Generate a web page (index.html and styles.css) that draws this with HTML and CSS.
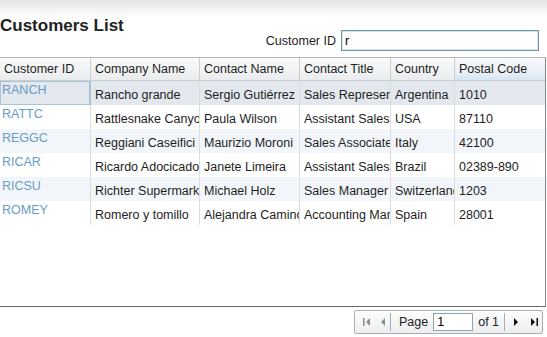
FILE: index.html
```html
<!DOCTYPE html>
<html lang="en">
<head>
    <meta charset="UTF-8">
    <meta name="viewport" content="width=device-width, initial-scale=1.0">
    <title>Customers List</title>
    <link rel="stylesheet" href="styles.css">
</head>
<body>
    <h1 class="title">Customers List</h1>

    <div class="filter">
        <label for="customer-id">Customer ID</label>
        <input type="text" id="customer-id" value="r">
    </div>

    <div class="grid">
        <div class="grid-row grid-head">
            <div class="cell">Customer ID</div>
            <div class="cell">Company Name</div>
            <div class="cell">Contact Name</div>
            <div class="cell">Contact Title</div>
            <div class="cell">Country</div>
            <div class="cell sorted">Postal Code</div>
        </div>
        <div class="grid-row selected">
            <div class="cell id current">RANCH</div>
            <div class="cell">Rancho grande</div>
            <div class="cell">Sergio Gutiérrez</div>
            <div class="cell">Sales Representative</div>
            <div class="cell">Argentina</div>
            <div class="cell">1010</div>
        </div>
        <div class="grid-row">
            <div class="cell id">RATTC</div>
            <div class="cell">Rattlesnake Canyon Grocery</div>
            <div class="cell">Paula Wilson</div>
            <div class="cell">Assistant Sales Representative</div>
            <div class="cell">USA</div>
            <div class="cell">87110</div>
        </div>
        <div class="grid-row alt">
            <div class="cell id">REGGC</div>
            <div class="cell">Reggiani Caseifici</div>
            <div class="cell">Maurizio Moroni</div>
            <div class="cell">Sales Associate</div>
            <div class="cell">Italy</div>
            <div class="cell">42100</div>
        </div>
        <div class="grid-row">
            <div class="cell id">RICAR</div>
            <div class="cell">Ricardo Adocicados</div>
            <div class="cell">Janete Limeira</div>
            <div class="cell">Assistant Sales Agent</div>
            <div class="cell">Brazil</div>
            <div class="cell">02389-890</div>
        </div>
        <div class="grid-row alt">
            <div class="cell id">RICSU</div>
            <div class="cell">Richter Supermarkt</div>
            <div class="cell">Michael Holz</div>
            <div class="cell">Sales Manager</div>
            <div class="cell">Switzerland</div>
            <div class="cell">1203</div>
        </div>
        <div class="grid-row">
            <div class="cell id">ROMEY</div>
            <div class="cell">Romero y tomillo</div>
            <div class="cell">Alejandra Camino</div>
            <div class="cell">Accounting Manager</div>
            <div class="cell">Spain</div>
            <div class="cell">28001</div>
        </div>
    </div>

    <div class="pager-wrap">
        <div class="pager">
            <span class="pager-btn first disabled">
                <svg width="7" height="8" viewBox="0 0 7 8"><rect x="0" y="0" width="1.5" height="8"/><polygon points="7,0 7,8 3,4"/></svg>
            </span>
            <span class="pager-btn prev disabled">
                <svg width="4" height="8" viewBox="0 0 4 8"><polygon points="4,0 4,8 0,4"/></svg>
            </span>
            <span class="pager-sep"></span>
            <span class="pager-text">Page</span>
            <input type="text" class="page-input" value="1">
            <span class="pager-text">of 1</span>
            <span class="pager-sep"></span>
            <span class="pager-btn next">
                <svg width="4" height="8" viewBox="0 0 4 8"><polygon points="0,0 0,8 4,4"/></svg>
            </span>
            <span class="pager-btn last">
                <svg width="7" height="8" viewBox="0 0 7 8"><polygon points="0,0 0,8 4,4"/><rect x="5.5" y="0" width="1.5" height="8"/></svg>
            </span>
        </div>
    </div>
</body>
</html>
```

FILE: styles.css
```css
body {
    margin: 0;
    font-family: "Liberation Sans", Arial, sans-serif;
    font-size: 12.5px;
    color: #1e1e1e;
    background: linear-gradient(#e4e4e4 0, #ffffff 17px) no-repeat;
    width: 547px;
}

.title {
    margin: 0;
    padding-top: 17px;
    font-size: 17px;
    line-height: 17px;
    font-weight: bold;
    color: #222;
}

.filter {
    display: flex;
    justify-content: flex-end;
    align-items: center;
    gap: 5px;
    margin-top: -4px;
    padding-right: 8px;
}

.filter label {
    color: #1e1e1e;
}

.filter input {
    width: 198px;
    height: 21px;
    box-sizing: border-box;
    border: 1px solid #6e97a8;
    box-shadow: inset 0 0 0 1px #d3e3ea;
    padding: 0 3px;
    font-family: inherit;
    font-size: 12.5px;
    color: #000;
    outline: none;
}

.grid {
    margin-top: 6px;
    width: 546px;
    height: 250px;
    box-sizing: border-box;
    border-top: 1px solid #b4b8bc;
    border-right: 1px solid #7f8a93;
    border-bottom: 1px solid #5f6a73;
    overflow: hidden;
}

.grid-row {
    display: grid;
    grid-template-columns: 91px 109px 100px 91px 64px 1fr;
    height: 24px;
}

.grid-row .cell {
    border-right: 1px solid #d9dee3;
    padding: 6px 0 0 4px;
    white-space: nowrap;
    overflow: hidden;
    text-overflow: clip;
    line-height: 16px;
}

.grid-row .cell:last-child {
    border-right: none;
}

.grid-head {
    height: 23px;
    background: linear-gradient(#fbfbfb, #e9ebed);
    border-bottom: 1px solid #c9ced3;
    box-sizing: border-box;
}

.grid-head .cell {
    padding: 3px 0 0 4px;
    border-right: 1px solid #c9ced3;
    color: #1e1e1e;
}

.grid-head .cell.sorted {
    background: linear-gradient(#f6f8fa 0, #eef2f6 55%, #d6e6f3 100%);
}

.grid-row.selected {
    background: #e3e8ee;
}

.grid-row.alt {
    background: #f2f6fb;
}

.grid-row .cell.id {
    color: #6a9cc6;
    padding: 1px 0 0 2px;
}

.grid-row .cell.current {
    box-shadow: inset 0 0 0 1px #a9c3d3;
    border-right-color: #a9c3d3;
}

.pager-wrap {
    display: flex;
    justify-content: flex-end;
    padding: 3px 4px 0 0;
}

.pager {
    display: flex;
    align-items: center;
    width: 189px;
    height: 24px;
    box-sizing: border-box;
    border: 1px solid #a7aeb4;
    border-radius: 2px;
    background: linear-gradient(#fdfdfd, #eceef0);
    padding: 0 0 0 8px;
    white-space: nowrap;
}

.pager-btn {
    display: flex;
    align-items: center;
    fill: #111;
}

.pager-btn.disabled {
    fill: #8a8f94;
}

.pager-btn.prev {
    margin-left: 11px;
}

.pager-btn.next {
    margin-left: 9px;
}

.pager-btn.last {
    margin-left: 13px;
}

.pager-sep {
    width: 1px;
    height: 18px;
    background: #a9afb5;
    margin: 0 0 0 5px;
}

.pager-text {
    color: #1e1e1e;
    margin-left: 5px;
}

.pager-sep + .pager-text {
    margin-left: 8px;
}

.page-input {
    width: 40px;
    height: 18px;
    box-sizing: border-box;
    margin-left: 5px;
    border: 1px solid #8fa3b0;
    padding: 0 3px;
    font-family: inherit;
    font-size: 12.5px;
    color: #000;
    outline: none;
}
```
